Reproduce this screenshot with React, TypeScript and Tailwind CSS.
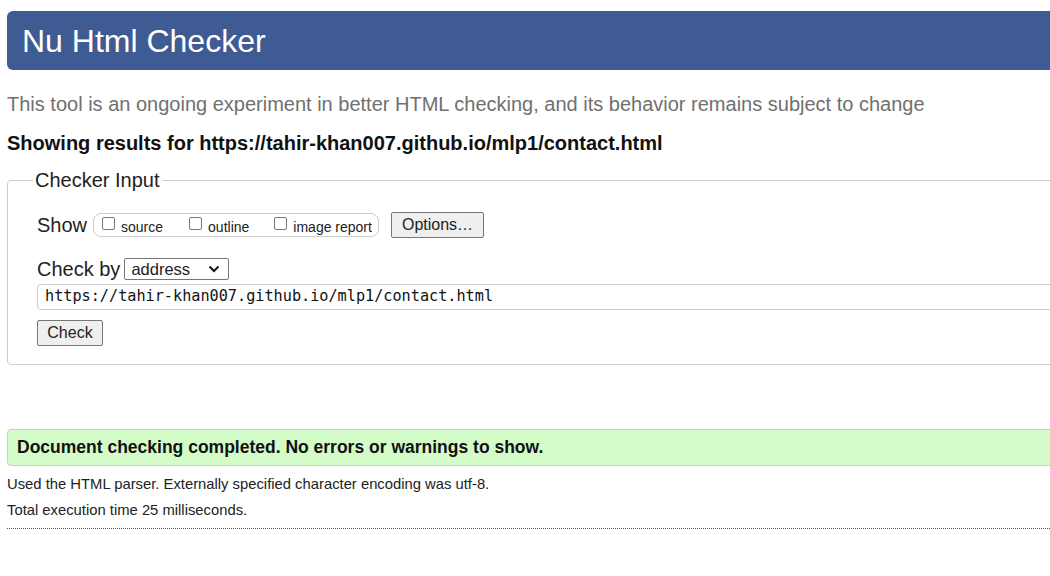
import React from "react";

const Box = () => (
  <span className="inline-block w-[13px] h-[13px] border border-[#767676] rounded-[2px] bg-white shrink-0" />
);

export default function App() {
  return (
    <div
      className="w-[1050px] h-[576px] overflow-hidden bg-white text-[#222]"
      style={{ fontFamily: '"Liberation Sans", Arial, sans-serif' }}
    >
      <div className="w-[1250px] pl-[7px]">
        <header className="mt-[11px] h-[59px] rounded-[6px] bg-[#3f5b94] flex items-center pl-[15px]">
          <h1 className="text-[32px] leading-none text-white">Nu Html Checker</h1>
        </header>

        <p className="mt-[23px] text-[20px] leading-[22px] text-[#707070]">
          This tool is an ongoing experiment in better HTML checking, and its behavior remains subject to change
        </p>
        <p className="mt-[17px] text-[20px] leading-[22px] font-bold text-[#111]">
          Showing results for https://tahir-khan007.github.io/mlp1/contact.html
        </p>

        <fieldset className="mt-[15px] border border-[#cccccc] rounded-[4px] pl-[29px] pb-[18px] pt-[21px]">
          <legend className="ml-[-4px] px-[2px] text-[20px] leading-[22px] text-[#222]">Checker Input</legend>

          <div className="flex items-center h-[26px]">
            <span className="text-[20px] leading-none">Show</span>
            <span className="ml-[6px] h-[24px] w-[286px] border border-[#cccccc] rounded-[8px] flex items-center pl-[8px]">
              <span className="flex items-center">
                <span className="mt-[-3px] flex"><Box /></span>
                <span className="ml-[6px] text-[14px] leading-none mt-[3px]">source</span>
              </span>
              <span className="flex items-center ml-[26px]">
                <span className="mt-[-3px] flex"><Box /></span>
                <span className="ml-[6px] text-[14px] leading-none mt-[3px]">outline</span>
              </span>
              <span className="flex items-center ml-[25px]">
                <span className="mt-[-3px] flex"><Box /></span>
                <span className="ml-[6px] text-[14px] leading-none mt-[3px]">image report</span>
              </span>
            </span>
            <span className="ml-[12px] h-[26px] w-[93px] border border-[#767676] rounded-[2px] bg-[#efefef] flex items-center justify-center text-[16px] leading-none">
              Options…
            </span>
          </div>

          <div className="mt-[20px] flex items-center h-[22px]">
            <span className="text-[20px] leading-none">Check by</span>
            <span className="ml-[4px] h-[22px] w-[105px] border border-[#767676] rounded-[2px] flex items-center pl-[6px] pr-[6px] text-[16.5px] leading-none">
              <span className="flex-1">address</span>
              <svg width="12" height="8" viewBox="0 0 12 8" className="mr-[2px]">
                <path d="M1.5 1.5 L6 6 L10.5 1.5" fill="none" stroke="#111" strokeWidth="2" />
              </svg>
            </span>
          </div>

          <div className="mt-[4px] h-[26px] border border-[#cccccc] rounded-[4px] flex items-center pl-[7px]">
            <span
              className="text-[15.2px] leading-none text-[#111]"
              style={{ fontFamily: '"DejaVu Sans Mono", "Liberation Mono", monospace' }}
            >
              https://tahir-khan007.github.io/mlp1/contact.html
            </span>
          </div>

          <div className="mt-[10px] flex">
            <span className="h-[26px] w-[66px] border border-[#767676] rounded-[2px] bg-[#efefef] flex items-center justify-center text-[16px] leading-none">
              Check
            </span>
          </div>
        </fieldset>

        <div className="mt-[64px] h-[37px] border border-[#cccccc] rounded-[4px] bg-[#d3fcc9] flex items-center pl-[9px]">
          <span className="text-[17.5px] leading-none font-bold text-[#111]">
            Document checking completed. No errors or warnings to show.
          </span>
        </div>

        <p className="mt-[9px] text-[14.8px] leading-[18px] text-[#222]">
          Used the HTML parser. Externally specified character encoding was utf-8.
        </p>
        <p className="mt-[8px] text-[14.8px] leading-[18px] text-[#222]">Total execution time 25 milliseconds.</p>
        <div className="mt-[9px] border-t border-dotted border-[#555]" />
      </div>
    </div>
  );
}
